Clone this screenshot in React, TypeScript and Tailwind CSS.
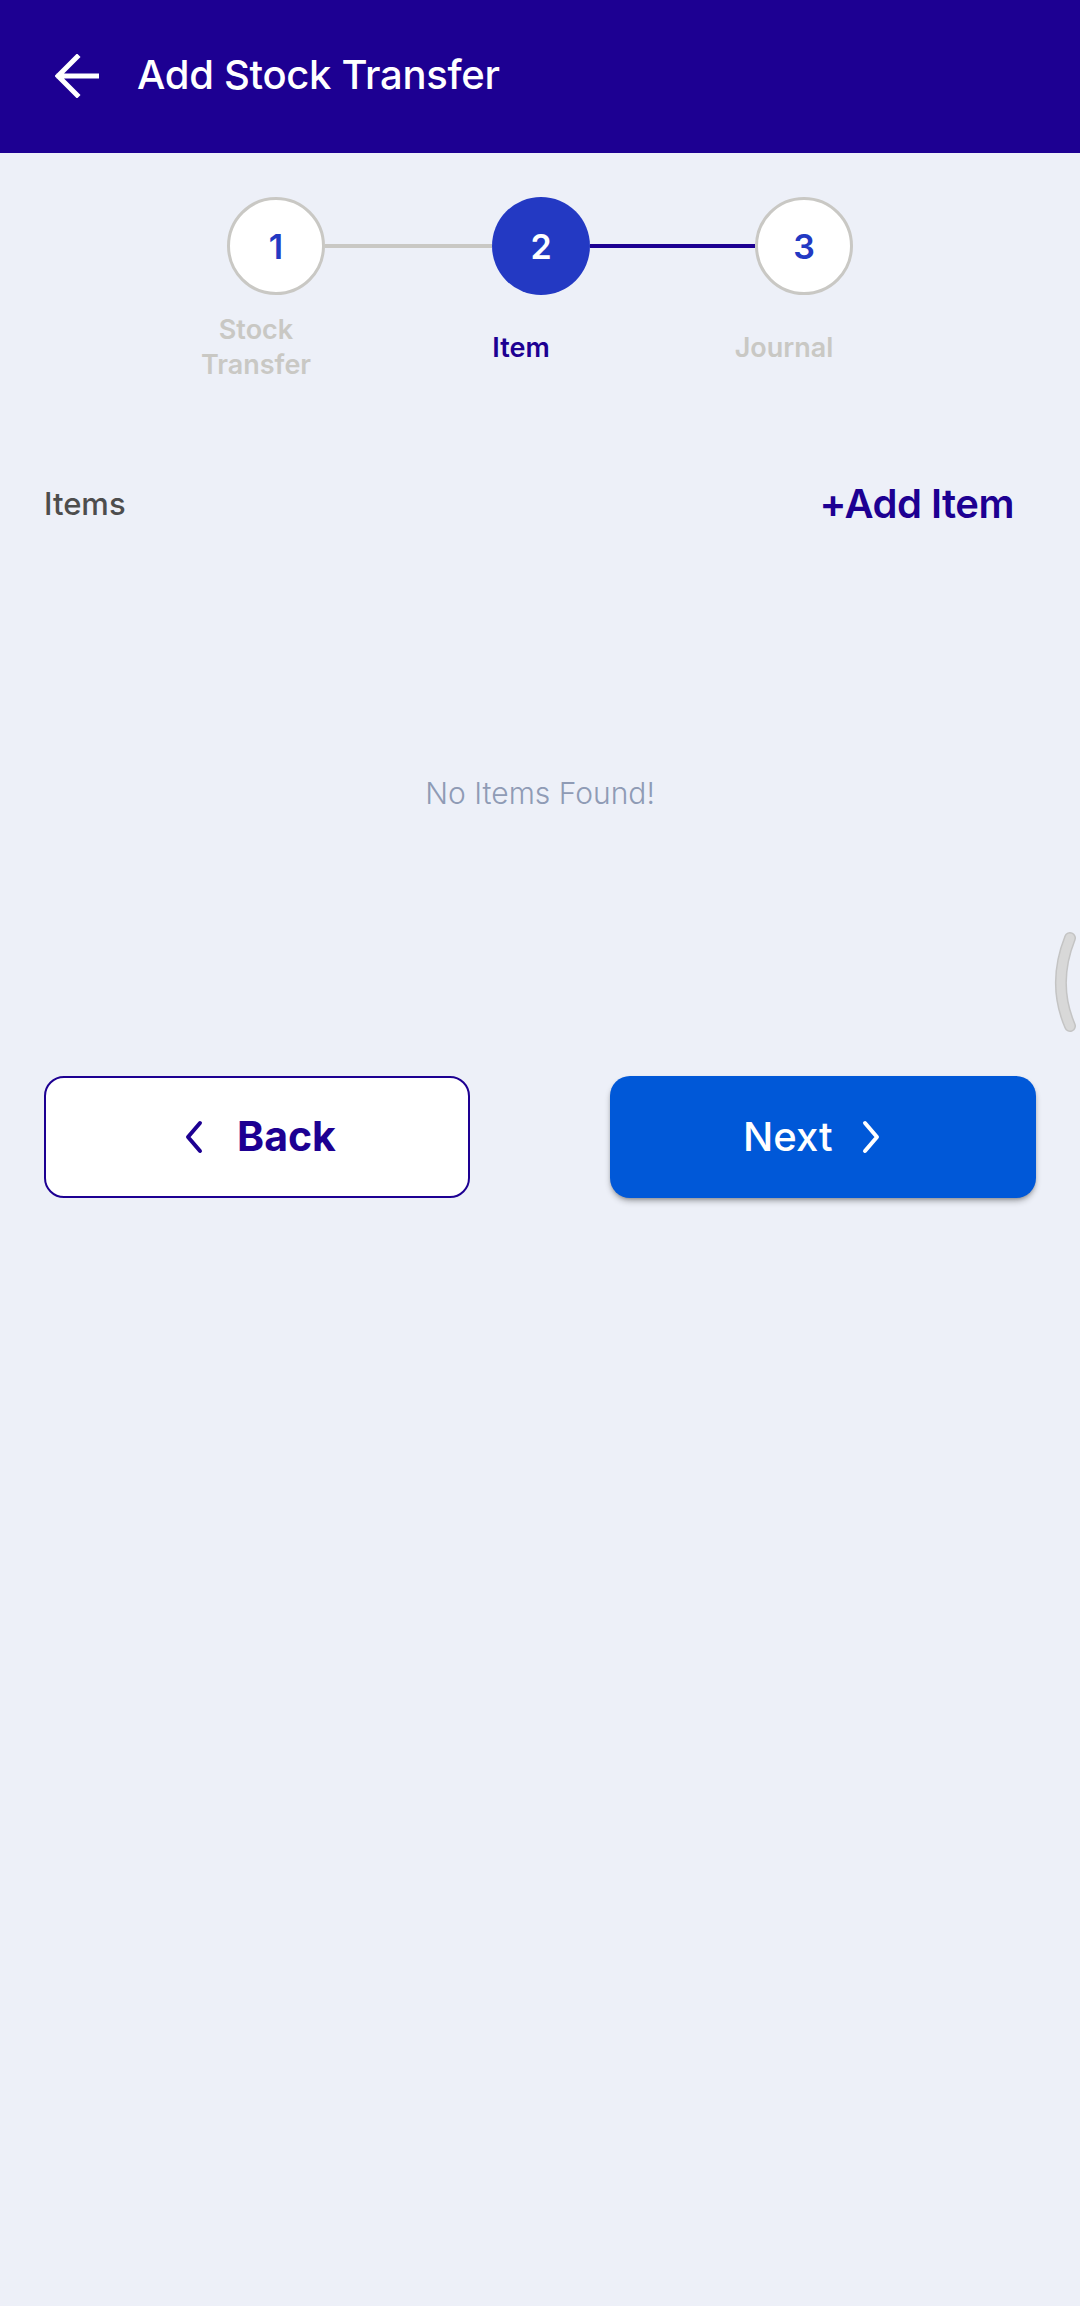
import React from "react";

const steps = [
  { n: "1", label: "Stock Transfer" },
  { n: "2", label: "Item" },
  { n: "3", label: "Journal" },
];

function StepCircle({ n, active }: { n: string; active: boolean }) {
  return (
    <div
      className={`w-[98px] h-[98px] rounded-full flex items-center justify-center text-[34px] font-semibold ${
        active
          ? "bg-[#2339c3] text-white"
          : "bg-white border-[3px] border-[#c9c8c4] text-[#2339c3]"
      }`}
    >
      {n}
    </div>
  );
}

function Step({ n, label, active }: { n: string; label: string; active: boolean }) {
  return (
    <div className="w-[98px] flex flex-col items-center">
      <StepCircle n={n} active={active} />
      <div className="mt-[17px] h-[70px] mr-[40px] flex items-center">
        <div
          className={`text-center text-[27px] leading-[35px] font-semibold w-[130px] ${
            active ? "text-[#1d0092]" : "text-[#c9c8c4]"
          }`}
        >
          {label.split(" ").map((w) => (
            <div key={w}>{w}</div>
          ))}
        </div>
      </div>
    </div>
  );
}

export default function App() {
  return (
    <div
      className="relative min-h-[2306px] bg-[#edf0f8]"
      style={{ fontFamily: "Inter, 'Noto Sans', sans-serif" }}
    >
      {/* header */}
      <div className="h-[153px] bg-[#1d0092] flex items-center pl-[55px]">
        <svg width="44" height="44" viewBox="0 0 44 44" fill="none" className="mb-[2px]">
          <path
            d="M42 22H4M22 3L3 22L22 41"
            stroke="white"
            strokeWidth="5"
            strokeLinecap="square"
          />
        </svg>
        <h1 className="ml-[38px] text-white text-[40px] font-medium tracking-[-0.3px] mb-[4px]">
          Add Stock Transfer
        </h1>
      </div>

      {/* stepper */}
      <div className="flex justify-center pt-[44px]">
        <div className="flex items-start">
          <Step n={steps[0].n} label={steps[0].label} active={false} />
          <div className="w-[167px] h-[4px] mt-[47px] bg-[#c9c8c4]" />
          <Step n={steps[1].n} label={steps[1].label} active={true} />
          <div className="w-[165px] h-[4px] mt-[47px] bg-[#1d0092]" />
          <Step n={steps[2].n} label={steps[2].label} active={false} />
        </div>
      </div>

      {/* items header */}
      <div className="mt-[97px] h-[50px] px-[44px] flex items-center justify-between">
        <span className="text-[31px] font-medium text-[#4d4d4d]">Items</span>
        <button className="mr-[22px] text-[40px] font-semibold text-[#1d0092] tracking-[-0.5px]">
          +Add Item
        </button>
      </div>

      <div className="pt-[244px] text-center text-[30px] leading-[40px] font-light text-[#8f9bb5]">
        No Items Found!
      </div>

      {/* buttons */}
      <div className="mt-[263px] px-[44px] flex justify-between">
        <button className="w-[426px] h-[122px] rounded-[20px] border-2 border-[#1d0092] bg-white flex items-center pl-[138px] gap-[33px] text-[#1d0092]">
          <svg width="20" height="34" viewBox="0 0 20 34" fill="none">
            <path d="M16 3L4 17L16 31" stroke="#1d0092" strokeWidth="4" strokeLinecap="round" strokeLinejoin="round" />
          </svg>
          <span className="text-[41px] font-bold">Back</span>
        </button>
        <button className="w-[426px] h-[122px] rounded-[20px] bg-[#0058d8] shadow-md shadow-black/30 flex items-center pl-[133px] gap-[28px] text-white">
          <span className="text-[40px] font-medium">Next</span>
          <svg width="20" height="34" viewBox="0 0 20 34" fill="none">
            <path d="M4 3L16 17L4 31" stroke="white" strokeWidth="4" strokeLinecap="round" strokeLinejoin="round" />
          </svg>
        </button>
      </div>

      {/* scroll handle */}
      <svg
        className="absolute right-0 top-[928px]"
        width="36"
        height="108"
        viewBox="0 0 36 108"
        fill="none"
      >
        <path d="M26 10C14 40 14 70 26 98" stroke="#c4c4c4" strokeWidth="12" strokeLinecap="round" />
        <path d="M26 10C14 40 14 70 26 98" stroke="#d8d8d8" strokeWidth="9" strokeLinecap="round" />
      </svg>
    </div>
  );
}
